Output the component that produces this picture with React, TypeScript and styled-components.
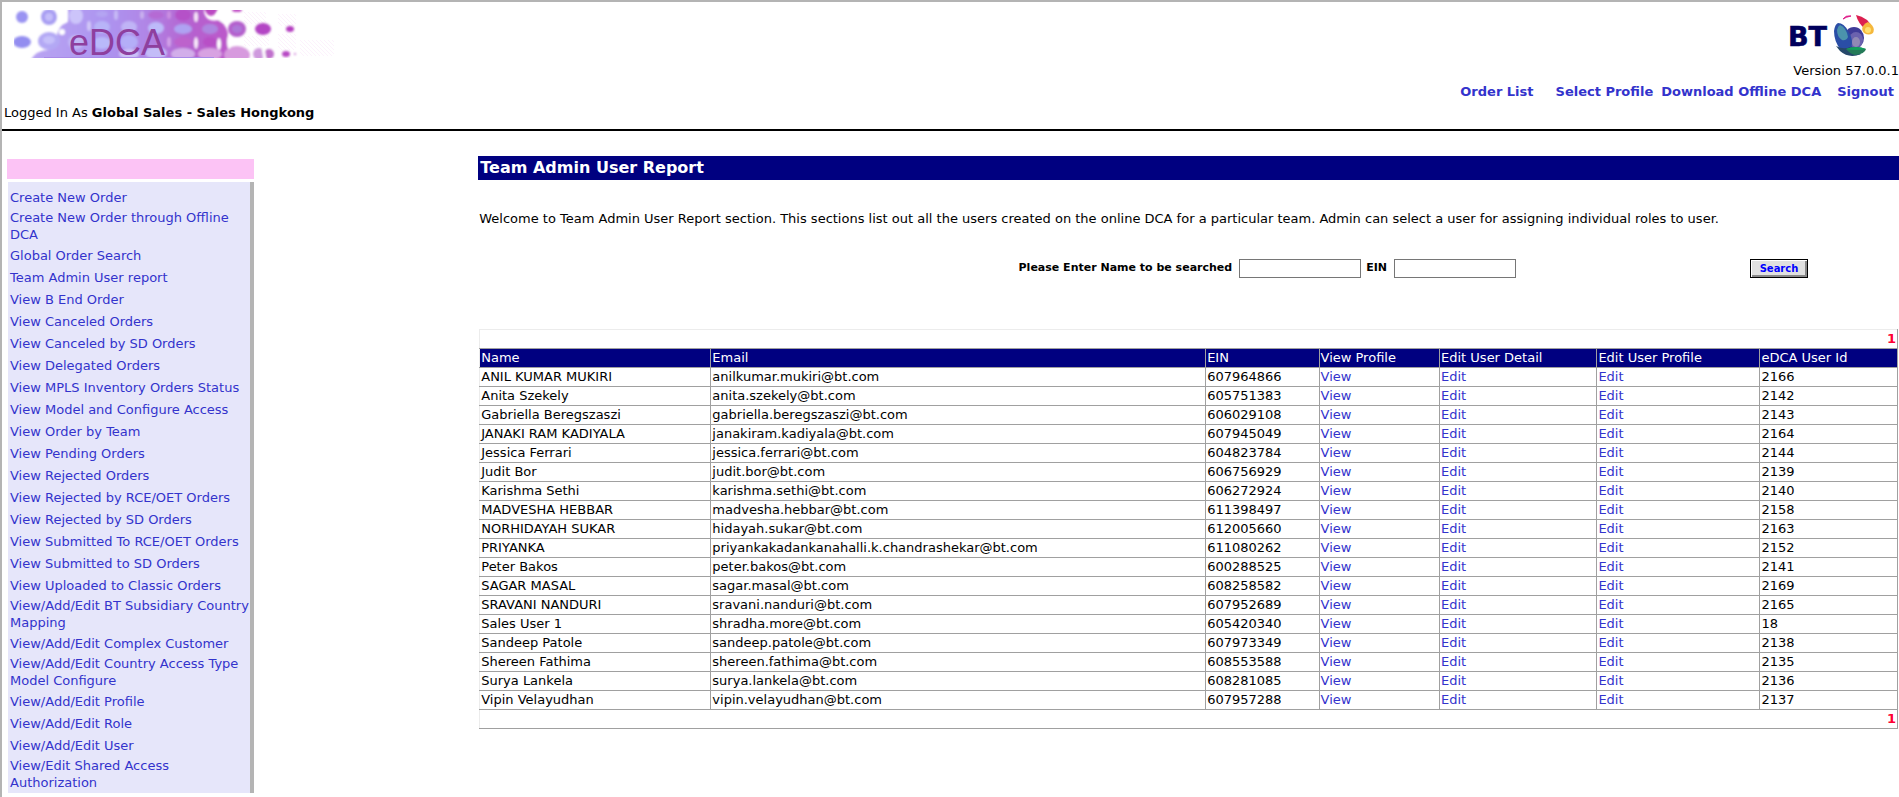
import React from "react";
import styled, { createGlobalStyle } from "styled-components";

const NAVY = "#000080";
const LINK = "#3333cc";
const GRID = "#a0a0a0";
const PALE = "#ececec";

const GlobalStyle = createGlobalStyle`
  * { box-sizing: border-box; }
  body {
    margin: 0;
    background: #fff;
    color: #000;
    font: 13px/16px Verdana, "DejaVu Sans", sans-serif;
  }
`;

const Page = styled.div`
  min-height: 100vh;
  border-top: 2px solid #b4b4b4;
  border-left: 2px solid #b4b4b4;
`;

const Header = styled.header`
  display: flex;
  justify-content: space-between;
  height: 129px;
  border-bottom: 2px solid #000;
`;

const Brand = styled.div`
  display: flex;
  flex-direction: column;
  justify-content: space-between;
  padding: 8px 0 8px 2px;

  svg {
    display: block;
    margin-left: 10px;
  }
`;

const LoginLine = styled.p`
  margin: 0;
`;

const Account = styled.div`
  display: flex;
  flex-direction: column;
  align-items: flex-end;
  padding-top: 10px;
`;

const LogoSlot = styled.div`
  height: 51px;
  padding-right: 24px;

  svg {
    display: block;
  }
`;

const Version = styled.div`
  margin-bottom: 5px;
`;

const TopNav = styled.nav`
  display: flex;
  padding-right: 5px;
  font-weight: bold;
`;

const Link = styled.a`
  color: ${LINK};
  text-decoration: none;
`;

const TopLink = styled(Link)<{ $gap: number }>`
  margin-left: ${(p) => p.$gap}px;
`;

const Body = styled.div`
  display: grid;
  grid-template-columns: 1fr 3fr;
  align-items: start;
`;

const Sidebar = styled.aside`
  width: 247px;
  margin: 28px 0 0 5px;
`;

const PinkBar = styled.div`
  height: 20px;
  margin-bottom: 3px;
  background: #fcc3f5;
`;

const Menu = styled.ul`
  margin: 0 0 0 1px;
  padding: 5px 0 0 2px;
  list-style: none;
  background: #e6e6fa;
  border-right: 4px solid #b4b4b4;
`;

const MenuItem = styled.li`
  display: flex;
  align-items: center;
  min-height: 22px;
  padding-bottom: 2px;
  line-height: 17px;
`;

const Main = styled.main`
  min-width: 0;
  padding: 25px 0 0 2px;
`;

const Title = styled.h1`
  margin: 0;
  padding: 0 2px;
  background: ${NAVY};
  color: #fff;
  font-size: 16px;
  line-height: 24px;
`;

const Intro = styled.p`
  margin: 31px 0;
  padding-left: 1px;
`;

const SearchForm = styled.form`
  display: flex;
  align-items: center;
  justify-content: flex-end;
  height: 20px;
  margin: 0 91px 51px 0;
  font-size: 11px;
  font-weight: bold;
`;

const Field = styled.label`
  display: flex;
  align-items: center;
  gap: 7px;
  margin-right: 5px;
`;

const TextBox = styled.input`
  width: 122px;
  height: 19px;
  padding: 1px 2px;
  border: 1px solid #767676;
  background: #fff;
  font: inherit;
`;

const SearchButton = styled.button`
  width: 58px;
  height: 19px;
  margin-left: 229px;
  padding: 0;
  border: 1px solid #000;
  background: #e0e0e0;
  box-shadow: inset 1px 1px #fff, inset -2px -2px #888;
  color: #0000ff;
  font: bold 10px/15px Verdana, "DejaVu Sans", sans-serif;
`;

const Table = styled.table`
  width: calc(100% - 2px);
  margin-left: 1px;
  table-layout: fixed;
  border-collapse: collapse;
  border-right: 1px solid ${GRID};
`;

const Col = styled.col<{ $share: number }>`
  width: ${(p) => p.$share}%;
`;

const Cell = styled.td`
  height: 19px;
  padding: 1px;
  border: 1px solid ${GRID};
  white-space: nowrap;

  &:first-child {
    border-left-color: ${PALE};
  }
`;

const HeadCell = styled(Cell).attrs({ as: "th", scope: "col" })`
  background: ${NAVY};
  color: #fff;
  font-weight: normal;
  text-align: left;
`;

const PagerCell = styled(Cell)<{ $top?: boolean }>`
  border-top-color: ${(p) => (p.$top ? PALE : GRID)};
  color: #ff0033;
  font-weight: bold;
  text-align: right;
`;

const menu = [
  "Create New Order",
  "Create New Order through Offline DCA",
  "Global Order Search",
  "Team Admin User report",
  "View B End Order",
  "View Canceled Orders",
  "View Canceled by SD Orders",
  "View Delegated Orders",
  "View MPLS Inventory Orders Status",
  "View Model and Configure Access",
  "View Order by Team",
  "View Pending Orders",
  "View Rejected Orders",
  "View Rejected by RCE/OET Orders",
  "View Rejected by SD Orders",
  "View Submitted To RCE/OET Orders",
  "View Submitted to SD Orders",
  "View Uploaded to Classic Orders",
  "View/Add/Edit BT Subsidiary Country Mapping",
  "View/Add/Edit Complex Customer",
  "View/Add/Edit Country Access Type Model Configure",
  "View/Add/Edit Profile",
  "View/Add/Edit Role",
  "View/Add/Edit User",
  "View/Edit Shared Access Authorization",
];

const columns: [string, number][] = [
  ["Name", 16.3],
  ["Email", 34.9],
  ["EIN", 8],
  ["View Profile", 8.5],
  ["Edit User Detail", 11.1],
  ["Edit User Profile", 11.5],
  ["eDCA User Id", 9.7],
];

const users = [
  ["ANIL KUMAR MUKIRI", "anilkumar.mukiri@bt.com", "607964866", "2166"],
  ["Anita Szekely", "anita.szekely@bt.com", "605751383", "2142"],
  ["Gabriella Beregszaszi", "gabriella.beregszaszi@bt.com", "606029108", "2143"],
  ["JANAKI RAM KADIYALA", "janakiram.kadiyala@bt.com", "607945049", "2164"],
  ["Jessica Ferrari", "jessica.ferrari@bt.com", "604823784", "2144"],
  ["Judit Bor", "judit.bor@bt.com", "606756929", "2139"],
  ["Karishma Sethi", "karishma.sethi@bt.com", "606272924", "2140"],
  ["MADVESHA HEBBAR", "madvesha.hebbar@bt.com", "611398497", "2158"],
  ["NORHIDAYAH SUKAR", "hidayah.sukar@bt.com", "612005660", "2163"],
  ["PRIYANKA", "priyankakadankanahalli.k.chandrashekar@bt.com", "611080262", "2152"],
  ["Peter Bakos", "peter.bakos@bt.com", "600288525", "2141"],
  ["SAGAR MASAL", "sagar.masal@bt.com", "608258582", "2169"],
  ["SRAVANI NANDURI", "sravani.nanduri@bt.com", "607952689", "2165"],
  ["Sales User 1", "shradha.more@bt.com", "605420340", "18"],
  ["Sandeep Patole", "sandeep.patole@bt.com", "607973349", "2138"],
  ["Shereen Fathima", "shereen.fathima@bt.com", "608553588", "2135"],
  ["Surya Lankela", "surya.lankela@bt.com", "608281085", "2136"],
  ["Vipin Velayudhan", "vipin.velayudhan@bt.com", "607957288", "2137"],
];

type Blob = [number, number, number, number, string];

const outerDots: Blob[] = [
  [8, 7, 6, 6, "#9a93f2"],
  [35, 7, 8, 8, "#a79df2"],
  [8, 32, 9, 6, "#938df0"],
  [35, 31, 11, 9, "#b3a8f4"],
  [223, 19, 9, 8, "#b45fcc"],
  [249, 19, 8, 6, "#b345c4"],
  [276, 19, 4, 3, "#b43cc0"],
  [223, 0, 5, 2, "#c04ec4"],
  [223, 45, 13, 9, "#d79ade"],
  [245, 44, 6, 6, "#cf9ade"],
  [255, 44, 5, 5, "#c070cc"],
  [272, 44, 4, 3, "#b848c4"],
  [281, 44, 1, 1, "#c66cd0"],
];

const innerDots: Blob[] = [
  [35, 7, 4, 4, "#c4bdfa"],
  [35, 30, 6, 4, "#c6c0fa"],
  [62, 6, 7, 8, "#ccc4fa"],
  [62, 32, 8, 7, "#c0b6f6"],
  [88, 17, 8, 6, "#b8b4f8"],
  [88, 4, 6, 3, "#b4a4f2"],
  [88, 33, 9, 6, "#b9b9fa"],
  [115, 17, 8, 6, "#c0b4f6"],
  [115, 32, 9, 7, "#b4aef8"],
  [115, 44, 10, 5, "#ccc2f8"],
  [142, 18, 8, 6, "#bdbafa"],
  [142, 43, 11, 6, "#c3bcf8"],
  [142, 5, 8, 4, "#b56bd4"],
  [169, 5, 8, 6, "#b551c8"],
  [169, 32, 9, 5, "#bd62cc"],
  [169, 19, 9, 5, "#afa2f2"],
  [169, 44, 12, 6, "#d2aeea"],
  [196, 32, 7, 5, "#b850c6"],
  [196, 19, 8, 5, "#ae86e0"],
  [196, 44, 12, 6, "#d8a2e2"],
  [223, 19, 5, 4, "#ad78d8"],
  [75, 16, 2, 5, "#d2c8f8"],
  [102, 5, 2, 5, "#c6baf6"],
  [128, 5, 2, 4, "#c9b0ee"],
  [155, 5, 2, 4, "#cb90e2"],
  [155, 32, 2, 5, "#d2a2e8"],
];

const whiteGaps: Blob[] = [
  [48, 4, 5, 8, "#fff"],
  [48, 22, 3, 3, "#fff"],
  [182, 7, 2, 5, "#f6e4f8"],
  [182, 33, 2, 6, "#f8e8fa"],
  [209, 6, 6, 6, "#fff"],
  [205, 34, 2, 6, "#fff"],
  [215, 32, 2, 7, "#fff"],
];

const Blobs = ({ items }: { items: Blob[] }) => (
  <>
    {items.map(([cx, cy, rx, ry, fill], i) => (
      <ellipse key={i} cx={cx} cy={cy} rx={rx} ry={ry} fill={fill} />
    ))}
  </>
);

const Banner = () => (
  <svg width="322" height="48" viewBox="0 0 322 48" role="img" aria-label="eDCA">
    <defs>
      <linearGradient id="wash" x1="0" x2="1" y1="0" y2="0">
        <stop offset="0" stopColor="#b9a4f2" />
        <stop offset="0.35" stopColor="#ad95f0" />
        <stop offset="0.55" stopColor="#b086e6" />
        <stop offset="0.75" stopColor="#b563d0" />
        <stop offset="1" stopColor="#bd54c8" />
      </linearGradient>
      <filter id="soft" x="-10%" y="-10%" width="120%" height="120%">
        <feGaussianBlur stdDeviation="1.2" />
      </filter>
      <pattern id="dither" width="4" height="4" patternUnits="userSpaceOnUse">
        <path d="M0 0L4 4" stroke="#f4d4f4" strokeWidth="0.5" />
      </pattern>
    </defs>
    <path d="M230 2h22v12h-22zM230 26h25v10h-25zM264 4h18v12h-18zM264 24h18v16h-18zM286 30h34v16h-34z" fill="url(#dither)" opacity="0.6" />
    <g filter="url(#soft)">
      <path
        d="M54 -3H190Q189 5 194 9Q198 12 205 10Q214 17 214 26Q213 36 218 40L226 51H16Q22 40 34 40Q44 36 43 28Q43 16 54 12Z"
        fill="url(#wash)"
      />
      <path d="M190 -2H204Q202 5 197 6Q192 5 190 -2Z" fill="#bb48c2" />
      <Blobs items={outerDots} />
      <Blobs items={innerDots} />
      <Blobs items={whiteGaps} />
      <path d="M249 37L251 50" stroke="#fff" strokeWidth="3" />
    </g>
    <path d="M30 47.5H200" stroke="#a98ae8" strokeWidth="1" />
    <text x="55" y="45" fontFamily="Arial, 'Liberation Sans', sans-serif" fontSize="36" fill="#8e3f9e">
      eDCA
    </text>
  </svg>
);

const BtLogo = () => (
  <svg width="86" height="44" viewBox="0 0 86 44" role="img" aria-label="BT">
    <text x="-1" y="34" fontFamily="Verdana, 'DejaVu Sans', sans-serif" fontWeight="bold" fontSize="27" fill="#00005c" stroke="#00005c" strokeWidth="0.6">
      BT
    </text>
    <path d="M54 7Q57 3 62 4Q57 5 54 7Z" fill="#e0208c" stroke="#e0208c" />
    <path d="M67 3Q79 5 84 17Q80 21 76 17Q69 11 67 3Z" fill="#dc2050" />
    <path d="M79 10Q87 15 84 21Q80 24 75 21Q72 18 74 14Q76 11 79 10Z" fill="#f5b83c" />
    <circle cx="79" cy="18" r="3" fill="#ffe070" />
    <ellipse cx="65" cy="26" rx="10" ry="11" fill="#3f3c98" />
    <ellipse cx="67" cy="28" rx="7" ry="8" fill="#6b62ae" />
    <ellipse cx="67" cy="30" rx="4" ry="5" fill="#9189b5" />
    <path d="M49 11Q55 11 59 19Q65 28 62 36Q65 40 72 42Q60 46 52 38Q45 30 45 19Q46 12 49 11Z" fill="#2a4ea6" />
    <path d="M51 13Q57 15 59 25Q57 29 53 28Q48 25 48 18Q49 14 51 13Z" fill="#4b93ac" />
    <path d="M47 34Q55 38 61 35Q65 40 72 42Q60 47 51 39Z" fill="#26486a" />
    <path d="M57 37Q67 33 77 37Q76 42 66 43Q61 42 57 37Z" fill="#257a58" />
    <path d="M57 37Q67 33 77 37Q67 39 57 37Z" fill="#12a05c" />
  </svg>
);

export default function App() {
  return (
    <>
      <GlobalStyle />
      <Page>
        <Header>
          <Brand>
            <Banner />
            <LoginLine>
              Logged In As <b>Global Sales - Sales Hongkong</b>
            </LoginLine>
          </Brand>
          <Account>
            <LogoSlot>
              <BtLogo />
            </LogoSlot>
            <Version>Version 57.0.0.1</Version>
            <TopNav>
              <TopLink href="#orders" $gap={0}>Order List</TopLink>
              <TopLink href="#profile" $gap={22}>Select Profile</TopLink>
              <TopLink href="#offline" $gap={8}>Download Offline DCA</TopLink>
              <TopLink href="#signout" $gap={16}>Signout</TopLink>
            </TopNav>
          </Account>
        </Header>
        <Body>
          <Sidebar>
            <PinkBar />
            <Menu>
              {menu.map((item) => (
                <MenuItem key={item}>
                  <Link href="#menu">{item}</Link>
                </MenuItem>
              ))}
            </Menu>
          </Sidebar>
          <Main>
            <Title>Team Admin User Report</Title>
            <Intro>
              Welcome to Team Admin User Report section. This sections list out all the users created on the online DCA
              for a particular team. Admin can select a user for assigning individual roles to user.
            </Intro>
            <SearchForm onSubmit={(e) => e.preventDefault()}>
              <Field>
                Please Enter Name to be searched
                <TextBox type="text" name="name" />
              </Field>
              <Field>
                EIN
                <TextBox type="text" name="ein" />
              </Field>
              <SearchButton type="submit">Search</SearchButton>
            </SearchForm>
            <Table>
              <colgroup>
                {columns.map(([label, share]) => (
                  <Col key={label} $share={share} />
                ))}
              </colgroup>
              <thead>
                <tr>
                  <PagerCell colSpan={7} $top>1</PagerCell>
                </tr>
                <tr>
                  {columns.map(([label]) => (
                    <HeadCell key={label}>{label}</HeadCell>
                  ))}
                </tr>
              </thead>
              <tbody>
                {users.map(([name, email, ein, id]) => (
                  <tr key={ein}>
                    <Cell>{name}</Cell>
                    <Cell>{email}</Cell>
                    <Cell>{ein}</Cell>
                    <Cell><Link href="#view">View</Link></Cell>
                    <Cell><Link href="#edit-user">Edit</Link></Cell>
                    <Cell><Link href="#edit-profile">Edit</Link></Cell>
                    <Cell>{id}</Cell>
                  </tr>
                ))}
              </tbody>
              <tfoot>
                <tr>
                  <PagerCell colSpan={7}>1</PagerCell>
                </tr>
              </tfoot>
            </Table>
          </Main>
        </Body>
      </Page>
    </>
  );
}
